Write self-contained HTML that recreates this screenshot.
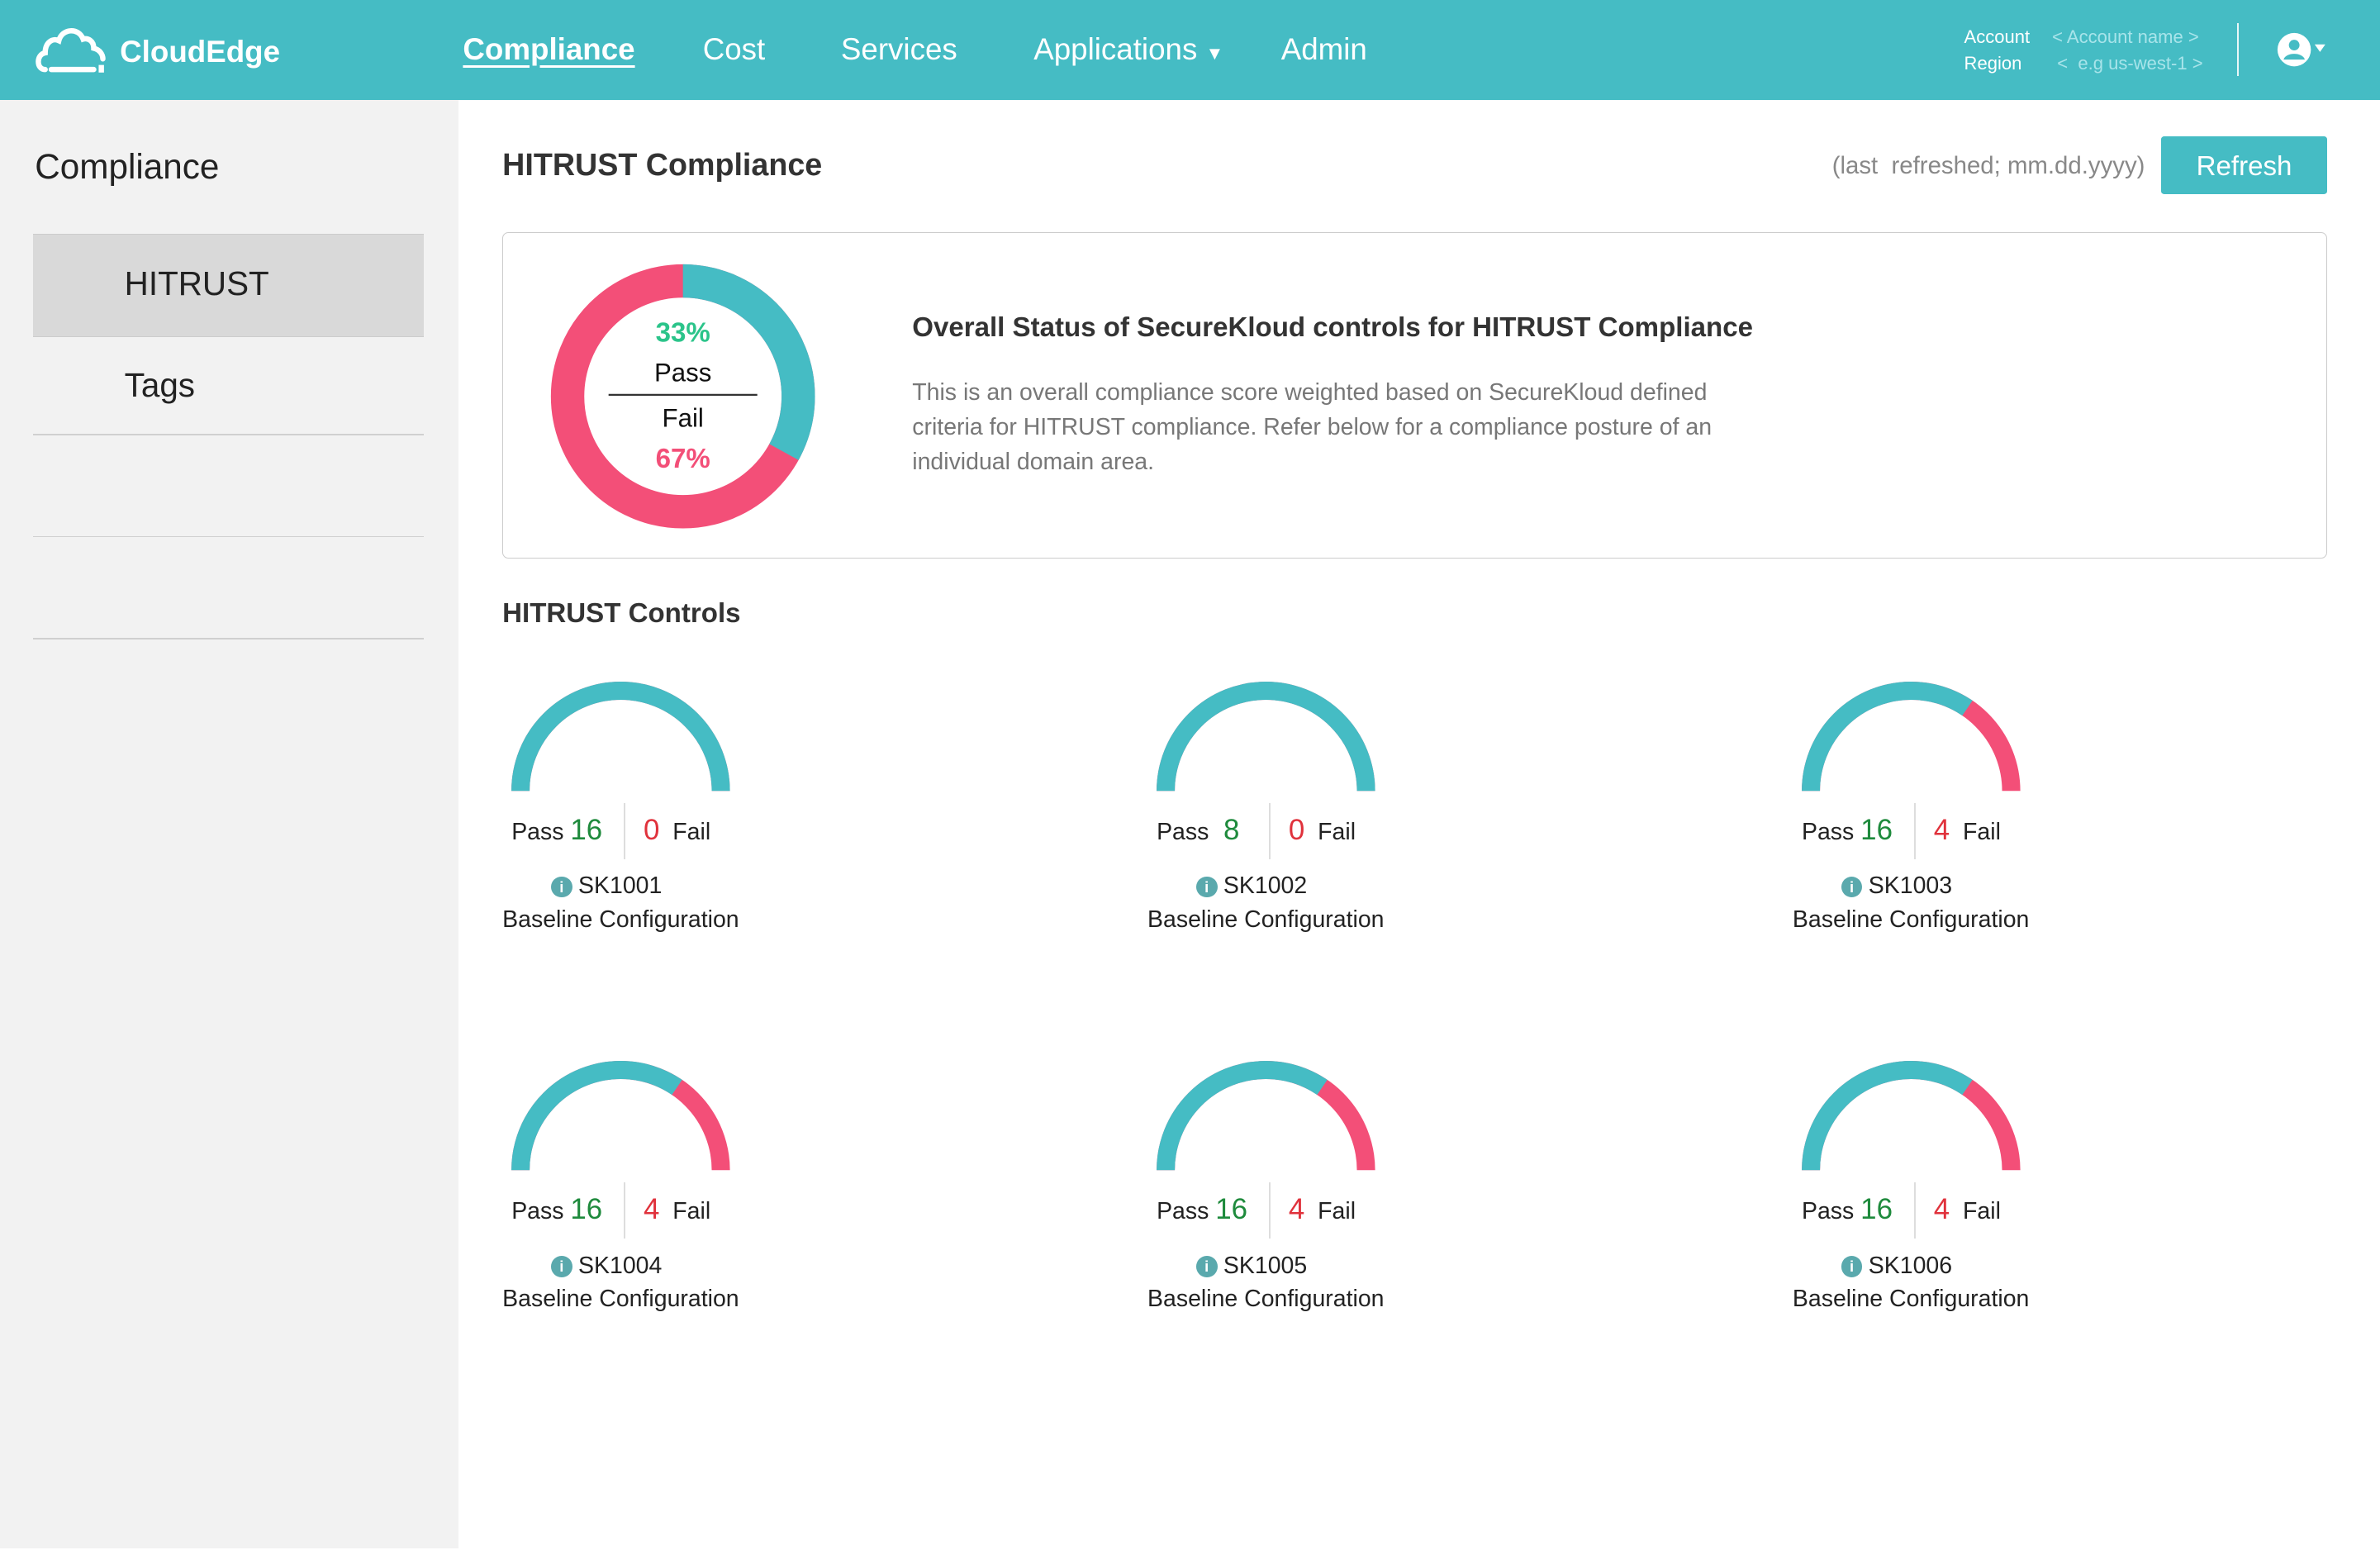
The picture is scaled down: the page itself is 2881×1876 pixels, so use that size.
<!DOCTYPE html>
<html><head><meta charset="utf-8"><style>
html,body{margin:0;padding:0;background:#fff;overflow:hidden}
body{width:1568px;height:1021px;zoom:1.83737;position:relative;font-family:"Liberation Sans",sans-serif;color:#222}
.a{position:absolute;white-space:nowrap}
.hdr{position:absolute;left:0;top:0;width:1568px;height:66px;background:#45bcc4}
.nav{color:#fff;font-size:20px;top:21px}
.side{position:absolute;left:0;top:66px;width:302px;height:954px;background:#f2f2f2}
.line{position:absolute;left:22px;width:257px;height:1px;background:#d0d0d0}
.pf{font-size:15.5px;color:#222}
.gn{color:#1e8a3c;font-size:19px}
.rn{color:#e0323c;font-size:19px}
.info{display:inline-block;width:14px;height:14px;border-radius:50%;background:#5aa9ad;color:#fff;font-size:10px;text-align:center;line-height:14px;font-weight:bold;vertical-align:1px;margin-right:4px}
</style></head><body>
<div class="hdr"></div>
<svg class="a" style="left:22px;top:16px" width="50" height="34" viewBox="0 0 50 34"><path d="M12 30 H40 M8 30 C2 30 2 20 8 19 C8 12 13 9 17 11 C19 3 30 2 33 10 C36 9 40 11 40 16 C44 17 46 20 46 23" fill="none" stroke="#fff" stroke-width="3.5" stroke-linecap="round"/><path d="M45 27 V32" stroke="#fff" stroke-width="3.5"/></svg>
<div class="a" style="left:79px;top:23px;color:#fff;font-size:20px;font-weight:bold">CloudEdge</div>
<div class="a nav" style="left:305px;text-decoration:underline;text-underline-offset:4px;font-weight:bold">Compliance</div>
<div class="a nav" style="left:463px">Cost</div>
<div class="a nav" style="left:554px">Services</div>
<div class="a nav" style="left:681px">Applications <span style="font-size:12px">▼</span></div>
<div class="a nav" style="left:844px">Admin</div>
<div class="a" style="left:1294px;top:16px;color:#fff;font-size:12px;line-height:17px">Account<br>Region</div>
<div class="a" style="left:1352px;top:16px;color:#a8e4ea;font-size:12px;line-height:17px">&lt; Account name &gt;<br>&nbsp;&lt;&nbsp; e.g us-west-1 &gt;</div>
<div class="a" style="left:1474px;top:15px;width:1px;height:35px;background:#e8f7f8"></div>
<svg class="a" style="left:1500px;top:21px" width="36" height="24"><circle cx="11.5" cy="11.5" r="11" fill="#fff"/><circle cx="11.5" cy="8.5" r="3.5" fill="#45bcc4"/><path d="M4.5 18 C6 13 17 13 18.5 18" fill="#45bcc4"/><path d="M25 8 L32 8 L28.5 13Z" fill="#fff"/></svg>

<div class="side"></div>
<div class="a" style="left:23px;top:97px;font-size:23px">Compliance</div>
<div class="a" style="left:22px;top:154px;width:257px;height:67px;background:#d9d9d9;border-top:1px solid #ccc;border-bottom:1px solid #ccc"></div>
<div class="a" style="left:82px;top:174px;font-size:22px">HITRUST</div>
<div class="a" style="left:82px;top:241px;font-size:22px">Tags</div>
<div class="line" style="top:286px"></div>
<div class="line" style="top:353px"></div>
<div class="line" style="top:420px"></div>

<div class="a" style="left:331px;top:97px;font-size:20.5px;font-weight:bold;color:#333">HITRUST Compliance</div>
<div class="a" style="left:1207px;top:100px;font-size:16px;color:#888">(last&nbsp; refreshed; mm.dd.yyyy)</div>
<div class="a" style="left:1424px;top:90px;width:109px;height:38px;background:#45bcc4;color:#fff;font-size:18px;text-align:center;line-height:40px;border-radius:2px">Refresh</div>

<div class="a" style="left:331px;top:153px;width:1201px;height:214px;border:1px solid #ccc;border-radius:4px"></div>
<svg class="a" style="left:362px;top:173px" width="176" height="176" viewBox="0 0 176 176">
<circle cx="88" cy="88" r="76" fill="none" stroke="#f34f78" stroke-width="22"/>
<circle cx="88" cy="88" r="76" fill="none" stroke="#45bcc4" stroke-width="22" stroke-dasharray="157.6 1000" transform="rotate(-90 88 88)"/>
<line x1="39" y1="87" x2="137" y2="87" stroke="#333" stroke-width="1.2"/>
<text x="88" y="52" text-anchor="middle" font-size="18" font-weight="bold" fill="#2bc48a" font-family="Liberation Sans">33%</text>
<text x="88" y="78" text-anchor="middle" font-size="17" fill="#111" font-family="Liberation Sans">Pass</text>
<text x="88" y="108" text-anchor="middle" font-size="17" fill="#111" font-family="Liberation Sans">Fail</text>
<text x="88" y="135" text-anchor="middle" font-size="18" font-weight="bold" fill="#f34f78" font-family="Liberation Sans">67%</text>
</svg>
<div class="a" style="left:601px;top:206px;font-size:18px;font-weight:bold;color:#333">Overall Status of SecureKloud controls for HITRUST Compliance</div>
<div class="a" style="left:601px;top:247px;font-size:15.5px;color:#777;line-height:23px">This is an overall compliance score weighted based on SecureKloud defined<br>criteria for HITRUST compliance. Refer below for a compliance posture of an<br>individual domain area.</div>

<div class="a" style="left:331px;top:394px;font-size:18px;font-weight:bold;color:#333">HITRUST Controls</div>

<div id="gs"></div>
<script>
var data=[[331,449,16,0,"SK1001"],[756,449,8,0,"SK1002"],[1181,449,16,4,"SK1003"],[331,699,16,4,"SK1004"],[756,699,16,4,"SK1005"],[1181,699,16,4,"SK1006"]];
var h="";
data.forEach(function(d){
var x=d[0],y=d[1],p=d[2],f=d[3];
var r=66,L=Math.PI*r,pl=f?L*0.69:L;
h+='<svg class="a" style="left:'+(x)+'px;top:'+y+'px" width="156" height="74" viewBox="0 0 156 74"><path d="M12 72 A66 66 0 0 1 144 72" fill="none" stroke="#f34f78" stroke-width="12"/><path d="M12 72 A66 66 0 0 1 144 72" fill="none" stroke="#45bcc4" stroke-width="12" stroke-dasharray="'+pl+' 1000"/></svg>';
h+='<div class="a pf" style="left:'+(x+6)+'px;top:'+(y+87)+'px">Pass <span class="gn">'+(p<10?'&nbsp;'+p:p)+'</span></div>';
h+='<div class="a" style="left:'+(x+80)+'px;top:'+(y+80)+'px;width:1px;height:37px;background:#ddd"></div>';
h+='<div class="a pf" style="left:'+(x+93)+'px;top:'+(y+87)+'px"><span class="rn">'+f+'</span>&nbsp; Fail</div>';
h+='<div class="a pf" style="left:'+(x+32)+'px;top:'+(y+126)+'px"><span class="info">i</span>'+d[4]+'</div>';
h+='<div class="a pf" style="left:'+(x)+'px;top:'+(y+148)+'px">Baseline Configuration</div>';
});
document.getElementById("gs").innerHTML=h;
</script>
</body></html>
